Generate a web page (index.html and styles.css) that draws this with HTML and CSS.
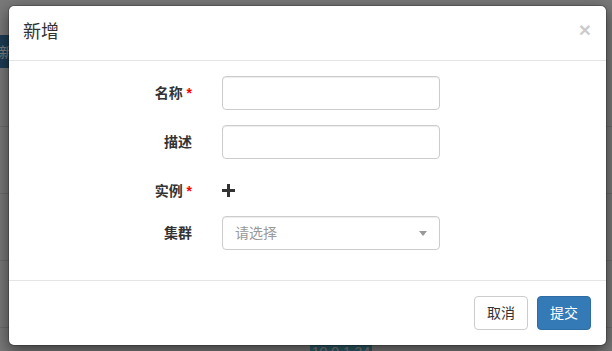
FILE: index.html
```html
<!DOCTYPE html>
<html lang="zh">
<head>
<meta charset="utf-8">
<title>新增</title>
<link rel="stylesheet" href="styles.css">
</head>
<body>
<div class="page">
  <div class="page-top"></div>
  <div class="toolbar"><span class="btn-new">新增</span></div>
  <div class="table">
    <div class="trow"></div>
    <div class="trow"></div>
    <div class="trow"></div>
    <div class="trow trow-last"><span class="ip-label">10.0.1.34</span></div>
  </div>
</div>
<div class="backdrop"></div>
<div class="modal">
  <div class="modal-header">
    <h4 class="modal-title">新增</h4>
    <span class="close">×</span>
  </div>
  <div class="modal-body">
    <div class="form-row">
      <label class="form-label">名称 <span class="req">*</span></label>
      <div class="form-control"></div>
    </div>
    <div class="form-row">
      <label class="form-label">描述</label>
      <div class="form-control"></div>
    </div>
    <div class="form-row">
      <label class="form-label">实例 <span class="req">*</span></label>
      <div class="add-wrap">
        <svg class="plus" width="13" height="13" viewBox="0 0 13 13"><rect x="5" y="0" width="3" height="13" fill="#333"/><rect x="0" y="5" width="13" height="3" fill="#333"/></svg>
      </div>
    </div>
    <div class="form-row">
      <label class="form-label">集群</label>
      <div class="form-control select"><span class="placeholder">请选择</span><span class="caret"></span></div>
    </div>
  </div>
  <div class="modal-footer">
    <span class="btn btn-default">取消</span>
    <span class="btn btn-primary">提交</span>
  </div>
</div>
</body>
</html>
```
FILE: styles.css
```css
* { box-sizing: border-box; }
html, body { margin: 0; padding: 0; }
body {
  width: 612px;
  height: 351px;
  overflow: hidden;
  position: relative;
  font-family: "Liberation Sans", "Noto Sans CJK SC", sans-serif;
  font-size: 14px;
  line-height: 20px;
  color: #333;
  background: #f2f2f2;
}
.page { height: 351px; overflow: hidden; }
.page-top { height: 35px; }
.toolbar { height: 33px; }
.btn-new {
  display: inline-block;
  height: 33px;
  margin-left: -1px;
  padding: 7px 12px 0 0;
  background: #3c78ad;
  color: #fff;
  font-size: 14px;
  width: 60px;
}
.table { padding-top: 58px; }
.trow { height: 67px; border-top: 1px solid #d8d8d8; }
.trow-last { position: relative; }
.ip-label {
  position: absolute;
  left: 310px;
  top: 15px;
  width: 62px;
  height: 24px;
  background: #5bb8cf;
  color: #fff;
  font-size: 14px;
  text-align: center;
  line-height: 18px;
}
.backdrop {
  position: absolute;
  inset: 0;
  background: rgba(0, 0, 0, 0.5);
}
.modal {
  position: absolute;
  top: 5px;
  left: 8px;
  width: 599px;
  background: #fff;
  background-clip: padding-box;
  border: 1px solid rgba(0, 0, 0, 0.2);
  border-radius: 6px;
  box-shadow: 0 5px 15px rgba(0, 0, 0, 0.5);
}
.modal-header {
  display: flex;
  justify-content: space-between;
  align-items: flex-start;
  padding: 14px 15px 16px 14px;
  border-bottom: 1px solid #e5e5e5;
}
.modal-title {
  margin: 0;
  font-size: 18px;
  line-height: 24px;
  font-weight: normal;
  color: #333;
}
.close {
  font-family: "Liberation Sans", sans-serif;
  font-size: 21px;
  font-weight: bold;
  line-height: 1;
  color: #000;
  opacity: 0.2;
  margin-top: -1px;
}
.modal-body { padding: 15px; }
.form-row {
  display: flex;
  gap: 30px;
  margin-bottom: 15px;
}
.form-label {
  width: 168px;
  text-align: right;
  font-weight: bold;
  padding-top: 7px;
  line-height: 20px;
}
.req { color: #ff0000; font-weight: bold; }
.form-control {
  width: 218px;
  height: 34px;
  border: 1px solid #ccc;
  border-radius: 4px;
  background: #fff;
  box-shadow: inset 0 1px 1px rgba(0, 0, 0, 0.075);
}
.add-wrap {
  height: 27px;
  display: flex;
  align-items: flex-end;
  padding-bottom: 4px;
}
.plus { display: block; }
.select {
  display: flex;
  align-items: center;
  justify-content: space-between;
  padding: 0 12px 0 12px;
}
.placeholder { color: #999; }
.caret {
  width: 0;
  height: 0;
  border-left: 4px solid transparent;
  border-right: 4px solid transparent;
  border-top: 5px solid #999;
}
.modal-footer {
  display: flex;
  justify-content: flex-end;
  gap: 9px;
  padding: 15px;
  border-top: 1px solid #e5e5e5;
}
.btn {
  display: inline-block;
  height: 34px;
  padding: 6px 12px;
  font-size: 14px;
  line-height: 20px;
  border: 1px solid transparent;
  border-radius: 4px;
}
.btn-default { background: #fff; border-color: #ccc; color: #333; }
.btn-primary { background: #337ab7; border-color: #2e6da4; color: #fff; }
```
